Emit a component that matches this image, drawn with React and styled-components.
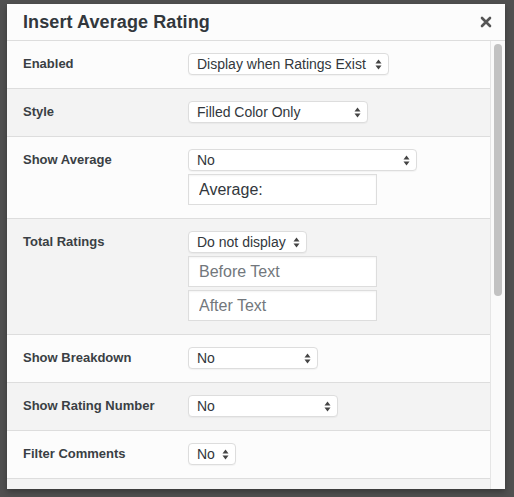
import styled, { createGlobalStyle } from "styled-components";

const Global = createGlobalStyle`
    body {
        margin: 0;
        background: #505050;
        font-family: "Liberation Sans", Arial, sans-serif;
    }
`;

const Backdrop = styled.div`
    min-height: 497px;
    padding: 4px 0 0 7px;
    box-sizing: border-box;
    background: #505050;
`;

const Dialog = styled.div`
    width: 498px;
    height: 485px;
    background: #fcfcfc;
    display: flex;
    flex-direction: column;
    overflow: hidden;
    box-shadow: 0 3px 6px rgba(0,0,0,0.3);
`;

const Header = styled.div`
    height: 36px;
    flex: none;
    border-bottom: 1px solid #ddd;
    display: flex;
    align-items: center;
    justify-content: space-between;
    padding: 0 13px 0 16px;
`;

const Title = styled.h1`
    margin: 0;
    font-size: 18px;
    font-weight: 700;
    color: #32373c;
    letter-spacing: 0.1px;
`;

const Close = styled.button`
    border: 0;
    background: none;
    padding: 0;
    width: 12px;
    height: 12px;
    display: flex;
    cursor: pointer;
`;

const Body = styled.div`
    flex: 1;
    display: flex;
    min-height: 0;
`;

const Rows = styled.div`
    flex: 1;
`;

const Row = styled.div`
    display: grid;
    grid-template-columns: 165px 1fr;
    padding: 12px 16px 13px;
    background: ${p => (p.$shade ? "#f3f3f3" : "#fcfcfc")};
    border-bottom: 1px solid #ddd;
`;

const Label = styled.div`
    font-size: 13px;
    font-weight: 700;
    line-height: 22px;
    color: #3a3f44;
`;

const Fields = styled.div`
    display: flex;
    flex-direction: column;
    align-items: flex-start;
`;

const Select = styled.div`
    width: ${p => p.$w}px;
    height: 22px;
    box-sizing: border-box;
    border: 1px solid #ddd;
    border-radius: 4px;
    background: #fff;
    display: flex;
    align-items: center;
    justify-content: space-between;
    padding: 0 6px 0 8px;
    font-size: 14px;
    color: #32373c;
    box-shadow: 0 1px 1px rgba(0,0,0,0.04);
`;

const Input = styled.input`
    width: 189px;
    height: 31px;
    box-sizing: border-box;
    margin-top: ${p => p.$gap}px;
    border: 1px solid #ddd;
    background: #fff;
    padding: 0 10px;
    font-family: inherit;
    font-size: 16px;
    color: #32373c;
    box-shadow: inset 0 1px 2px rgba(0,0,0,0.05);
    outline: none;
    &::placeholder {
        color: #72777c;
    }
`;

const Track = styled.div`
    width: 14px;
    flex: none;
    border-left: 1px solid #e5e5e5;
    background: #fafafa;
    padding-top: 3px;
    display: flex;
    justify-content: center;
`;

const Thumb = styled.div`
    width: 8px;
    height: 252px;
    border-radius: 4px;
    background: #c2c2c2;
`;

const Arrows = () => (
    <svg width="7" height="11" viewBox="0 0 7 11">
        <path d="M3.5 0.5 L6.5 4.5 L0.5 4.5 Z M3.5 10.5 L6.5 6.5 L0.5 6.5 Z" fill="#444" />
    </svg>
);

const Drop = ({ w, children }) => (
    <Select $w={w}>
        <span>{children}</span>
        <Arrows />
    </Select>
);

const fields = [
    { label: "Enabled", select: "Display when Ratings Exist", w: 201 },
    { label: "Style", select: "Filled Color Only", w: 180 },
    { label: "Show Average", select: "No", w: 229, inputs: [{ value: "Average:" }] },
    { label: "Total Ratings", select: "Do not display", w: 119, inputs: [{ ph: "Before Text" }, { ph: "After Text" }] },
    { label: "Show Breakdown", select: "No", w: 130 },
    { label: "Show Rating Number", select: "No", w: 150 },
    { label: "Filter Comments", select: "No", w: 48 },
    { label: "", select: null },
];

const App = () => {
    return (
        <Backdrop>
            <Global />
            <Dialog>
                <Header>
                    <Title>Insert Average Rating</Title>
                    <Close aria-label="Close">
                        <svg width="12" height="12" viewBox="0 0 12 12">
                            <path d="M2 2 L10 10 M10 2 L2 10" stroke="#555" strokeWidth="2.6" strokeLinecap="round" />
                        </svg>
                    </Close>
                </Header>
                <Body>
                    <Rows>
                        {fields.map((f, i) => (
                            <Row key={i} $shade={i % 2 === 1}>
                                <Label>{f.label}</Label>
                                <Fields>
                                    {f.select && <Drop w={f.w}>{f.select}</Drop>}
                                    {f.inputs && f.inputs.map((inp, j) => (
                                        <Input
                                            key={j}
                                            $gap={3}
                                            defaultValue={inp.value}
                                            placeholder={inp.ph}
                                            readOnly
                                        />
                                    ))}
                                </Fields>
                            </Row>
                        ))}
                    </Rows>
                    <Track>
                        <Thumb />
                    </Track>
                </Body>
            </Dialog>
        </Backdrop>
    );
};

export default App;
